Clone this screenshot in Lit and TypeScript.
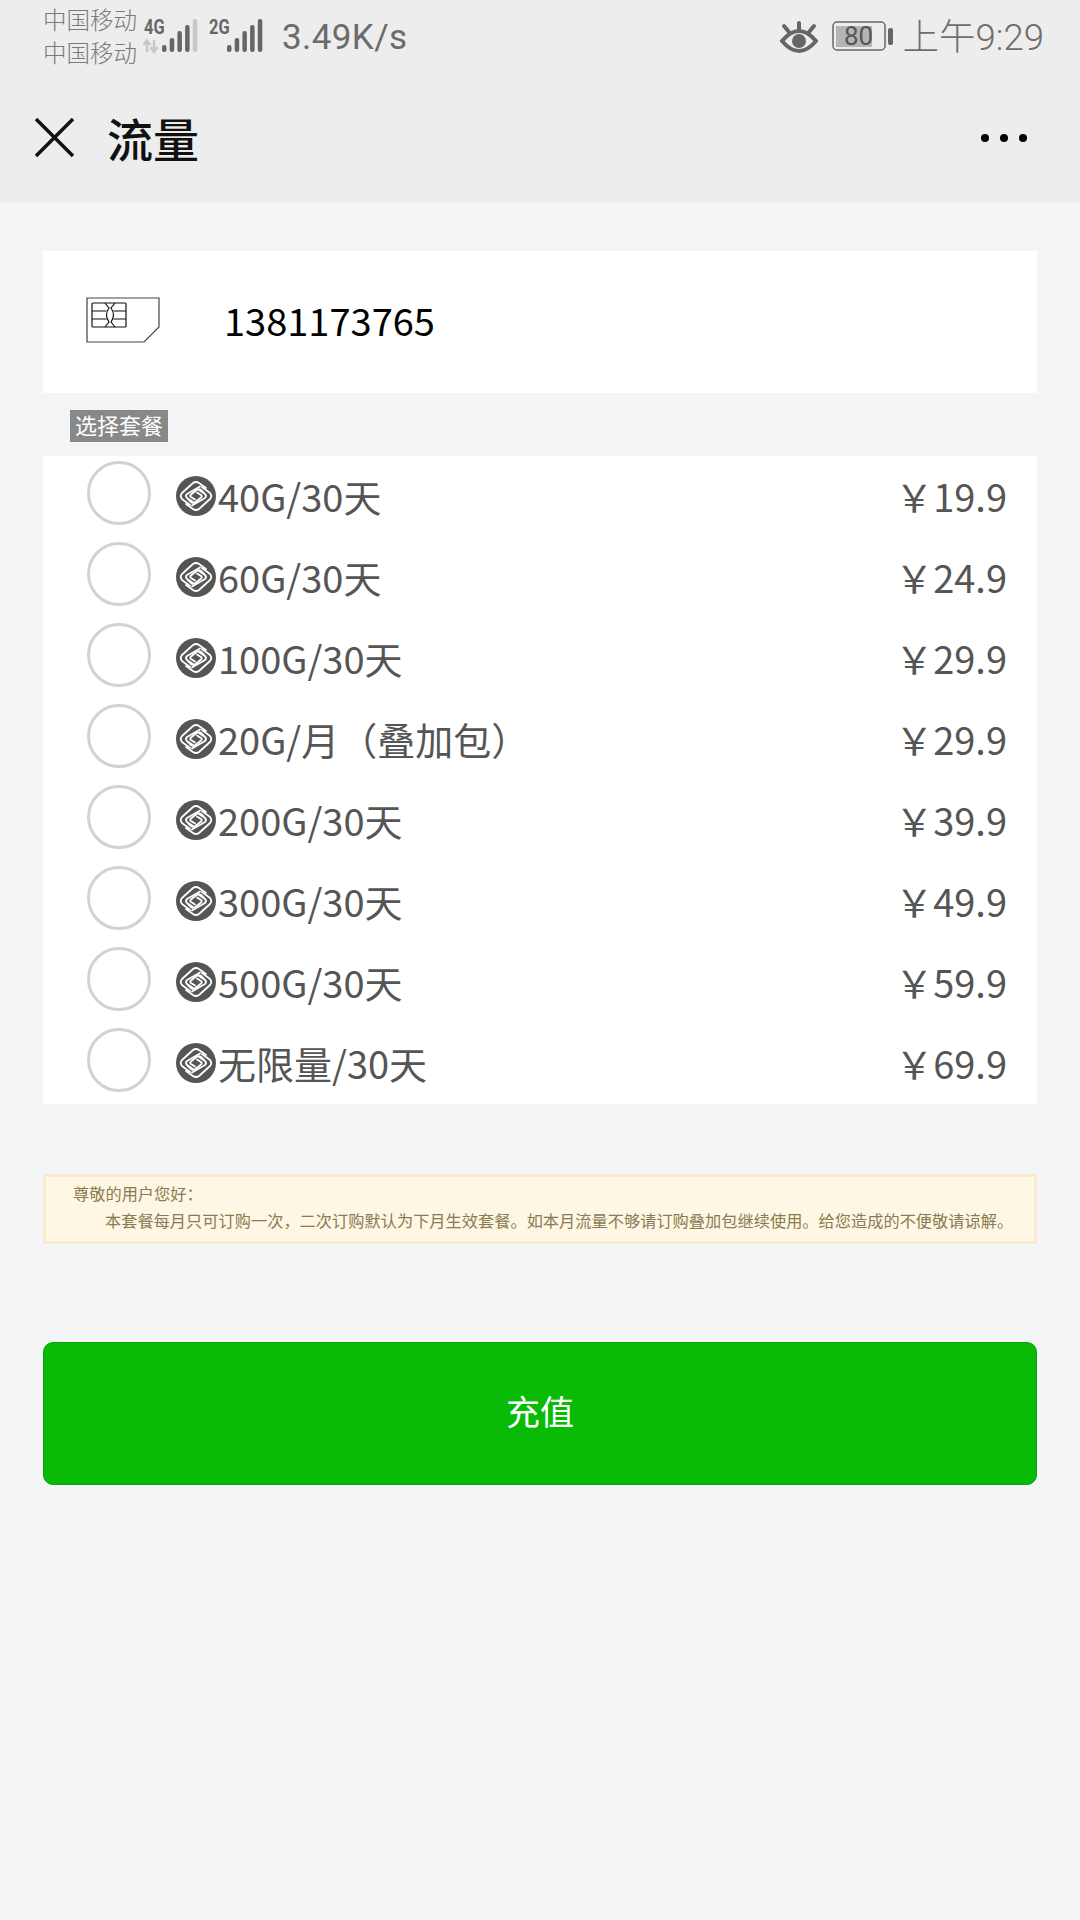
import { LitElement, html, css, svg } from "lit";
import { customElement } from "lit/decorators.js";

const plans = [
  ["40G/30天", "￥19.9"],
  ["60G/30天", "￥24.9"],
  ["100G/30天", "￥29.9"],
  ["20G/月（叠加包）", "￥29.9"],
  ["200G/30天", "￥39.9"],
  ["300G/30天", "￥49.9"],
  ["500G/30天", "￥59.9"],
  ["无限量/30天", "￥69.9"],
];

const heights = [7, 14, 21, 27, 33];
const signal = (colors: string[]) =>
  colors.map((c, i) => svg`<rect x=${i * 7.7} y=${33 - heights[i]} width="4.500" height=${heights[i]} rx="2" fill=${c}/>`);

const strands = svg`
  <path d="M30 12 L23 7 Q20 5 17 7 L6 17 Q3.500 20 6 23 L14 29"/>
  <path d="M24 10.500 L11 18 Q9 20 11 22 L17 26"/>
  <path d="M28 17 L24.500 13.500 Q22.500 12.500 20.500 14 L15 18.500 Q13.500 20 15 21 L19 23.500"/>`;

const logo = html`<svg class="logo" viewBox="0 0 40 40">
  <circle cx="20" cy="20" r="20" fill="#555"/>
  <g fill="none" stroke="#fff" stroke-width="1.800" stroke-linejoin="round" stroke-linecap="round">
    ${strands}
    <g transform="rotate(180 20 20)">${strands}</g>
  </g>
</svg>`;

@customElement("app-root")
export class AppRoot extends LitElement {
  static styles = css`
    :host {
      display: block;
      width: 1080px;
      height: 1920px;
      background: #f3f5f7;
      font-family: "Noto Sans CJK SC", "Noto Sans", sans-serif;
      overflow: hidden;
    }
    .top { background: #ededed; height: 203px; display: flex; flex-direction: column; }
    .status {
      height: 73px;
      display: flex;
      align-items: flex-start;
      padding: 0 36px 0 43px;
      color: #6b6b6b;
    }
    .carriers { font-size: 23.500px; font-weight: 300; line-height: 33px; width: 100px; padding-top: 3px; color: #7a7a7a; }
    .sig { position: relative; width: 56px; height: 44px; margin-top: 15px; margin-right: 9px; }
    .sig svg { display: block; }
    .net {
      font: bold 20px/18px Roboto, sans-serif;
      position: absolute;
      left: 1px;
      top: 3px;
      color: #666;
      transform: scaleX(.82);
      transform-origin: left;
    }
    .speed { font: 35px/38px Roboto, sans-serif; margin: 19px 0 0 19px; letter-spacing: .4px; }
    .spacer { flex: 1; }
    .eye { margin: 20px 14px 0 0; display: block; }
    .bat { margin: 21px 10px 0 0; display: block; }
    .batt-wrap { position: relative; }
    .batt-num {
      position: absolute;
      left: 7px;
      top: 21px;
      width: 40px;
      text-align: center;
      font: 26px/30px Roboto, sans-serif;
      color: #555;
    }
    .time { font: 36.500px/38px Roboto, "Noto Sans CJK SC", sans-serif; font-weight: 300; margin-top: 19px; color: #6e6e6e; }
    .nav { flex: 1; display: flex; align-items: center; padding: 0 53px 0 35px; }
    .nav-title { font-size: 46px; font-weight: 500; color: #111; margin-left: 32px; line-height: 60px; flex: 1; margin-bottom: 3px; }
    .x { display: block; }
    .dots { display: flex; gap: 11px; }
    .dots i { width: 8px; height: 8px; border-radius: 50%; background: #000; display: block; }

    .content { padding: 48px 43px 0; display: flex; flex-direction: column; }
    .phone { height: 142px; background: #fff; display: flex; align-items: center; padding-left: 43px; }
    .phone svg { margin-bottom: 4px; }
    .phone span { font-size: 38px; color: #000; margin-left: 64px; line-height: 50px; margin-bottom: 4px; }
    .tag {
      align-self: flex-start;
      margin: 17px 0 14px 27px;
      height: 32px;
      padding: 0 5px;
      background: #888;
      color: #fff;
      font-size: 22px;
      line-height: 29px;
    }
    .list { background: #fff; height: 648px; display: flex; flex-direction: column; }
    .row { height: 81px; flex: none; display: flex; position: relative; padding-left: 44px; color: #555; }
    .radio {
      width: 64px;
      height: 64px;
      box-sizing: border-box;
      border: 3px solid #d2d2d2;
      border-radius: 50%;
      margin-top: 5px;
      background: #fff;
    }
    .logo { width: 40px; height: 40px; margin: 20px 2px 0 25px; display: block; flex: none; }
    .name { font-size: 38px; line-height: 50px; margin-top: 15px; flex: 1; }
    .price { font-size: 38px; line-height: 50px; margin-top: 15px; margin-right: 30px; }
    .notice {
      margin-top: 70px;
      height: 70px;
      box-sizing: border-box;
      border: 3px solid #faebd0;
      background: #fdf7e3;
      color: #8b7a52;
      font-size: 16.200px;
      letter-spacing: .03px;
      line-height: 27px;
      padding: 3px 0 0 27px;
      white-space: nowrap;
    }
    .notice .in { padding-left: 32px; }
    .btn {
      margin-top: 98px;
      height: 143px;
      box-sizing: border-box;
      background: #09bb07;
      border: 1px solid #07a505;
      border-radius: 10px;
      color: #fff;
      font-size: 34px;
      display: flex;
      align-items: center;
      justify-content: center;
      padding-bottom: 6px;
    }
  `;

  render() {
    return html`
      <div class="top">
        <div class="status">
          <div class="carriers">中国移动<br />中国移动</div>
          <div class="sig">
            <span class="net">4G</span>
            <svg width="56" height="44" viewBox="0 0 56 44">
              <path d="M4 37 V26 M.5 30 L4 25.500 L7.500 30" stroke="#c8c8c8" stroke-width="2.500" fill="none"/>
              <path d="M11 25 V36 M7.500 32 L11 37 L14.500 32" stroke="#c8c8c8" stroke-width="2.500" fill="none"/>
              <g transform="translate(19 4)">${signal(["#666", "#666", "#666", "#666", "#c8c8c8"])}</g>
            </svg>
          </div>
          <div class="sig" style="width:55px;margin-right:0">
            <span class="net">2G</span>
            <svg width="55" height="44" viewBox="0 0 55 44">
              <g transform="translate(19 4)">${signal(["#666", "#666", "#666", "#666", "#666"])}</g>
            </svg>
          </div>
          <div class="speed">3.49K/s</div>
          <div class="spacer"></div>
          <svg class="eye" width="38" height="34" viewBox="0 0 38 34">
            <path d="M2 21 Q19 1 36 21 Q19 41 2 21 Z" fill="none" stroke="#666" stroke-width="4"/>
            <circle cx="19" cy="21" r="7" fill="#666"/>
            <path d="M19 3 V9 M4 6 L9 12 M34 6 L29 12" stroke="#666" stroke-width="4" stroke-linecap="round"/>
          </svg>
          <div class="batt-wrap">
            <svg class="bat" width="61" height="30" viewBox="0 0 61 30">
              <rect x="1" y="1" width="52" height="28" rx="4" fill="none" stroke="#666" stroke-width="1.500"/>
              <rect x="4" y="5" width="36" height="21" fill="#b4b4b4"/>
              <rect x="56" y="7" width="5" height="17" rx="2" fill="#666"/>
            </svg>
            <span class="batt-num">80</span>
          </div>
          <div class="time">上午9:29</div>
        </div>
        <div class="nav">
          <svg class="x" width="40" height="40" viewBox="0 0 40 40">
            <path d="M1 1 L38 38 M38 1 L1 38" stroke="#111" stroke-width="3.500"/>
          </svg>
          <div class="nav-title">流量</div>
          <div class="dots"><i></i><i></i><i></i></div>
        </div>
      </div>
      <div class="content">
        <div class="phone">
          <svg width="74" height="46" viewBox="0 0 74 46">
            <path d="M1 1 H73 V30 L58 45 H1 Z" fill="#fff" stroke="#444" stroke-width="1.200"/>
            <g fill="none" stroke="#111" stroke-width="1.200">
              <rect x="6" y="6" width="34" height="24" rx="1"/>
              <path d="M6 14 H20.500 M6 22 H20.500 M27.500 14 H40 M27.500 22 H40"/>
              <path d="M19 6 L23 11 Q18 18 23 25 L19 30 M29 6 L25 11 Q30 18 25 25 L29 30"/>
            </g>
          </svg>
          <span>1381173765</span>
        </div>
        <div class="tag">选择套餐</div>
        <div class="list">
          ${plans.map(
            ([n, p]) => html`<div class="row">
              <div class="radio"></div>
              ${logo}
              <div class="name">${n}</div>
              <div class="price">${p}</div>
            </div>`
          )}
        </div>
        <div class="notice">
          <div>尊敬的用户您好：</div>
          <div class="in">本套餐每月只可订购一次，二次订购默认为下月生效套餐。如本月流量不够请订购叠加包继续使用。给您造成的不便敬请谅解。</div>
        </div>
        <div class="btn">充值</div>
      </div>
    `;
  }
}
